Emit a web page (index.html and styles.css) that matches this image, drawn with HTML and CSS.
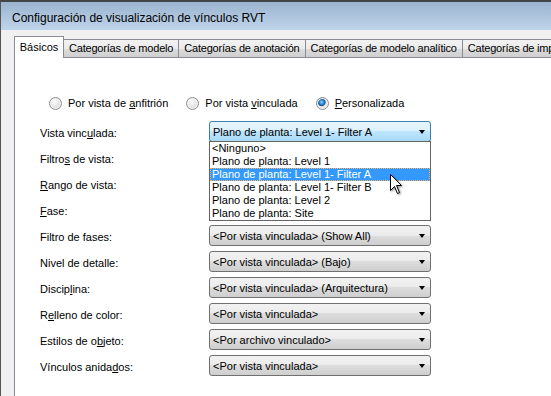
FILE: index.html
```html
<!DOCTYPE html>
<html lang="es">
<head>
  <meta charset="UTF-8">
  <title>Configuración de visualización de vínculos RVT</title>
  <link rel="stylesheet" href="styles.css">
</head>
<body>
  <div class="window">
    <div class="titlebar">Configuración de visualización de vínculos RVT</div>
    <div class="client">
      <div class="tabs">
        <div class="tab active">Básicos</div>
        <div class="tab">Categorías de modelo</div>
        <div class="tab">Categorías de anotación</div>
        <div class="tab">Categorías de modelo analítico</div>
        <div class="tab">Categorías de importación</div>
      </div>
      <div class="panel">
        <div class="radios">
          <label class="radio"><span class="dot"></span><span>Por vista de <u>a</u>nfitrión</span></label>
          <label class="radio"><span class="dot"></span><span>Por vista <u>v</u>inculada</span></label>
          <label class="radio"><span class="dot checked"></span><span><u>P</u>ersonalizada</span></label>
        </div>
        <div class="form">
          <div class="row">
            <span class="label">Vista vinc<u>u</u>lada:</span>
            <div class="combo focus">
              <span class="value">Plano de planta: Level 1- Filter A</span>
              <span class="arrow"></span>
              <div class="list">
                <div class="item">&lt;Ninguno&gt;</div>
                <div class="item">Plano de planta: Level 1</div>
                <div class="item selected">Plano de planta: Level 1- Filter A</div>
                <div class="item">Plano de planta: Level 1- Filter B</div>
                <div class="item">Plano de planta: Level 2</div>
                <div class="item">Plano de planta: Site</div>
                <svg class="cursor" width="14" height="22" viewBox="0 0 14 22">
                  <path d="M0.5 0.5 L0.5 16.5 L4.5 12.5 L7.5 19.5 L9.5 18.5 L6.5 11.5 L11.5 11.5 Z" fill="#fff" stroke="#000" stroke-width="1" stroke-linejoin="miter"/>
                </svg>
              </div>
            </div>
          </div>
          <div class="row"><span class="label">Filtro<u>s</u> de vista:</span></div>
          <div class="row"><span class="label"><u>R</u>ango de vista:</span></div>
          <div class="row"><span class="label"><u>F</u>ase:</span></div>
          <div class="row">
            <span class="label">Filtro de fases:</span>
            <div class="combo"><span class="value">&lt;Por vista vinculada&gt; (Show All)</span><span class="arrow"></span></div>
          </div>
          <div class="row">
            <span class="label">Nivel de detalle:</span>
            <div class="combo"><span class="value">&lt;Por vista vinculada&gt; (Bajo)</span><span class="arrow"></span></div>
          </div>
          <div class="row">
            <span class="label">Discip<u>l</u>ina:</span>
            <div class="combo"><span class="value">&lt;Por vista vinculada&gt; (Arquitectura)</span><span class="arrow"></span></div>
          </div>
          <div class="row">
            <span class="label">R<u>e</u>lleno de color:</span>
            <div class="combo"><span class="value">&lt;Por vista vinculada&gt;</span><span class="arrow"></span></div>
          </div>
          <div class="row">
            <span class="label">Estilos de o<u>b</u>jeto:</span>
            <div class="combo"><span class="value">&lt;Por archivo vinculado&gt;</span><span class="arrow"></span></div>
          </div>
          <div class="row">
            <span class="label">Vínculos anida<u>d</u>os:</span>
            <div class="combo"><span class="value">&lt;Por vista vinculada&gt;</span><span class="arrow"></span></div>
          </div>
        </div>
      </div>
    </div>
  </div>
</body>
</html>
```

FILE: styles.css
```css
body {
  margin: 0;
  width: 551px;
  height: 396px;
  overflow: hidden;
  font-family: "Liberation Sans", Arial, sans-serif;
  font-size: 11px;
  color: #000;
  background: #f0f0f0;
}
.window {
  height: 396px;
  box-sizing: border-box;
  border-top: 2px solid #444;
  border-left: 1px solid #555;
  background: #f0f0f0;
}
.titlebar {
  height: 24px;
  padding: 4px 0 0 11px;
  line-height: 24px;
  font-size: 12px;
  white-space: nowrap;
  background: linear-gradient(#9bb4cf, #bed4ea);
}
.client {
  padding: 6px 0 0 13px;
  overflow: hidden;
}
.tabs {
  display: flex;
  align-items: flex-end;
  height: 22px;
  margin-bottom: -1px;
  white-space: nowrap;
}
.tab {
  height: 17px;
  line-height: 17px;
  padding: 0 5px;
  margin-bottom: 1px;
  margin-left: -1px;
  letter-spacing: -0.2px;
  border: 1px solid #898c95;
  border-bottom: none;
  background: linear-gradient(#f2f2f2, #ebebeb 50%, #dddddd 50%, #cfcfcf);
  flex-shrink: 0;
}
.tab.active {
  position: relative;
  z-index: 1;
  margin-left: 0;
  margin-bottom: 0;
  width: 48px;
  padding: 0;
  text-align: center;
  letter-spacing: 0;
  height: 21px;
  line-height: 20px;
  background: #fff;
}
.panel {
  height: 340px;
  margin-right: -20px;
  border: 1px solid #898c95;
  background: #fff;
}
.radios {
  display: flex;
  align-items: center;
  height: 14px;
  margin-top: 38px;
  padding-left: 34px;
}
.radio {
  display: flex;
  align-items: center;
  gap: 6px;
  margin-right: 18px;
  line-height: 14px;
  white-space: nowrap;
}
.dot {
  width: 11px;
  height: 11px;
  border: 1px solid #8e8f8f;
  border-radius: 50%;
  background: radial-gradient(circle at 40% 35%, #fbfbfb, #e2e2e2 60%, #cfcfcf);
  box-shadow: inset 0 0 0 1px #f4f4f4;
}
.dot.checked {
  background: radial-gradient(circle at 42% 38%, #9fd6ff 0, #2f8fd8 2px, #1a5a94 3.5px, #e8e8e8 4.5px, #dedede 100%);
}
.form {
  margin-top: 11px;
  padding-left: 25px;
}
.row {
  display: grid;
  grid-template-columns: 169px 222px;
  height: 21px;
  margin-bottom: 5px;
}
.label {
  padding-top: 2px;
  line-height: 21px;
  white-space: nowrap;
}
.combo {
  position: relative;
  display: flex;
  align-items: center;
  height: 21px;
  box-sizing: border-box;
  border: 1px solid #707070;
  border-radius: 3px;
  background: linear-gradient(#f2f2f2, #ebebeb 50%, #dddddd 50%, #cfcfcf);
}
.combo.focus {
  z-index: 2;
  border-color: #3c7fb1;
  background: linear-gradient(#eaf6fd, #d9f0fc 50%, #bee6fd 50%, #a7d9f5);
}
.value {
  flex: 1;
  padding: 2px 0 0 3px;
  line-height: 17px;
  white-space: nowrap;
}
.arrow {
  width: 0;
  height: 0;
  margin: 1px 5px 0 0;
  border-left: 3.5px solid transparent;
  border-right: 3.5px solid transparent;
  border-top: 4px solid #000;
}
.list {
  position: absolute;
  top: 19px;
  left: -1px;
  width: 222px;
  box-sizing: border-box;
  border: 1px solid #646464;
  background: #fff;
}
.item {
  height: 13px;
  line-height: 13px;
  padding-left: 2px;
  white-space: nowrap;
}
.item.selected {
  background: #3399ff;
  color: #fff;
  outline: 1px dotted #f6b26b;
  outline-offset: -1px;
}
.cursor {
  position: absolute;
  left: 180px;
  top: 32px;
  filter: drop-shadow(1px 1px 1px rgba(0, 0, 0, 0.45));
}
```
